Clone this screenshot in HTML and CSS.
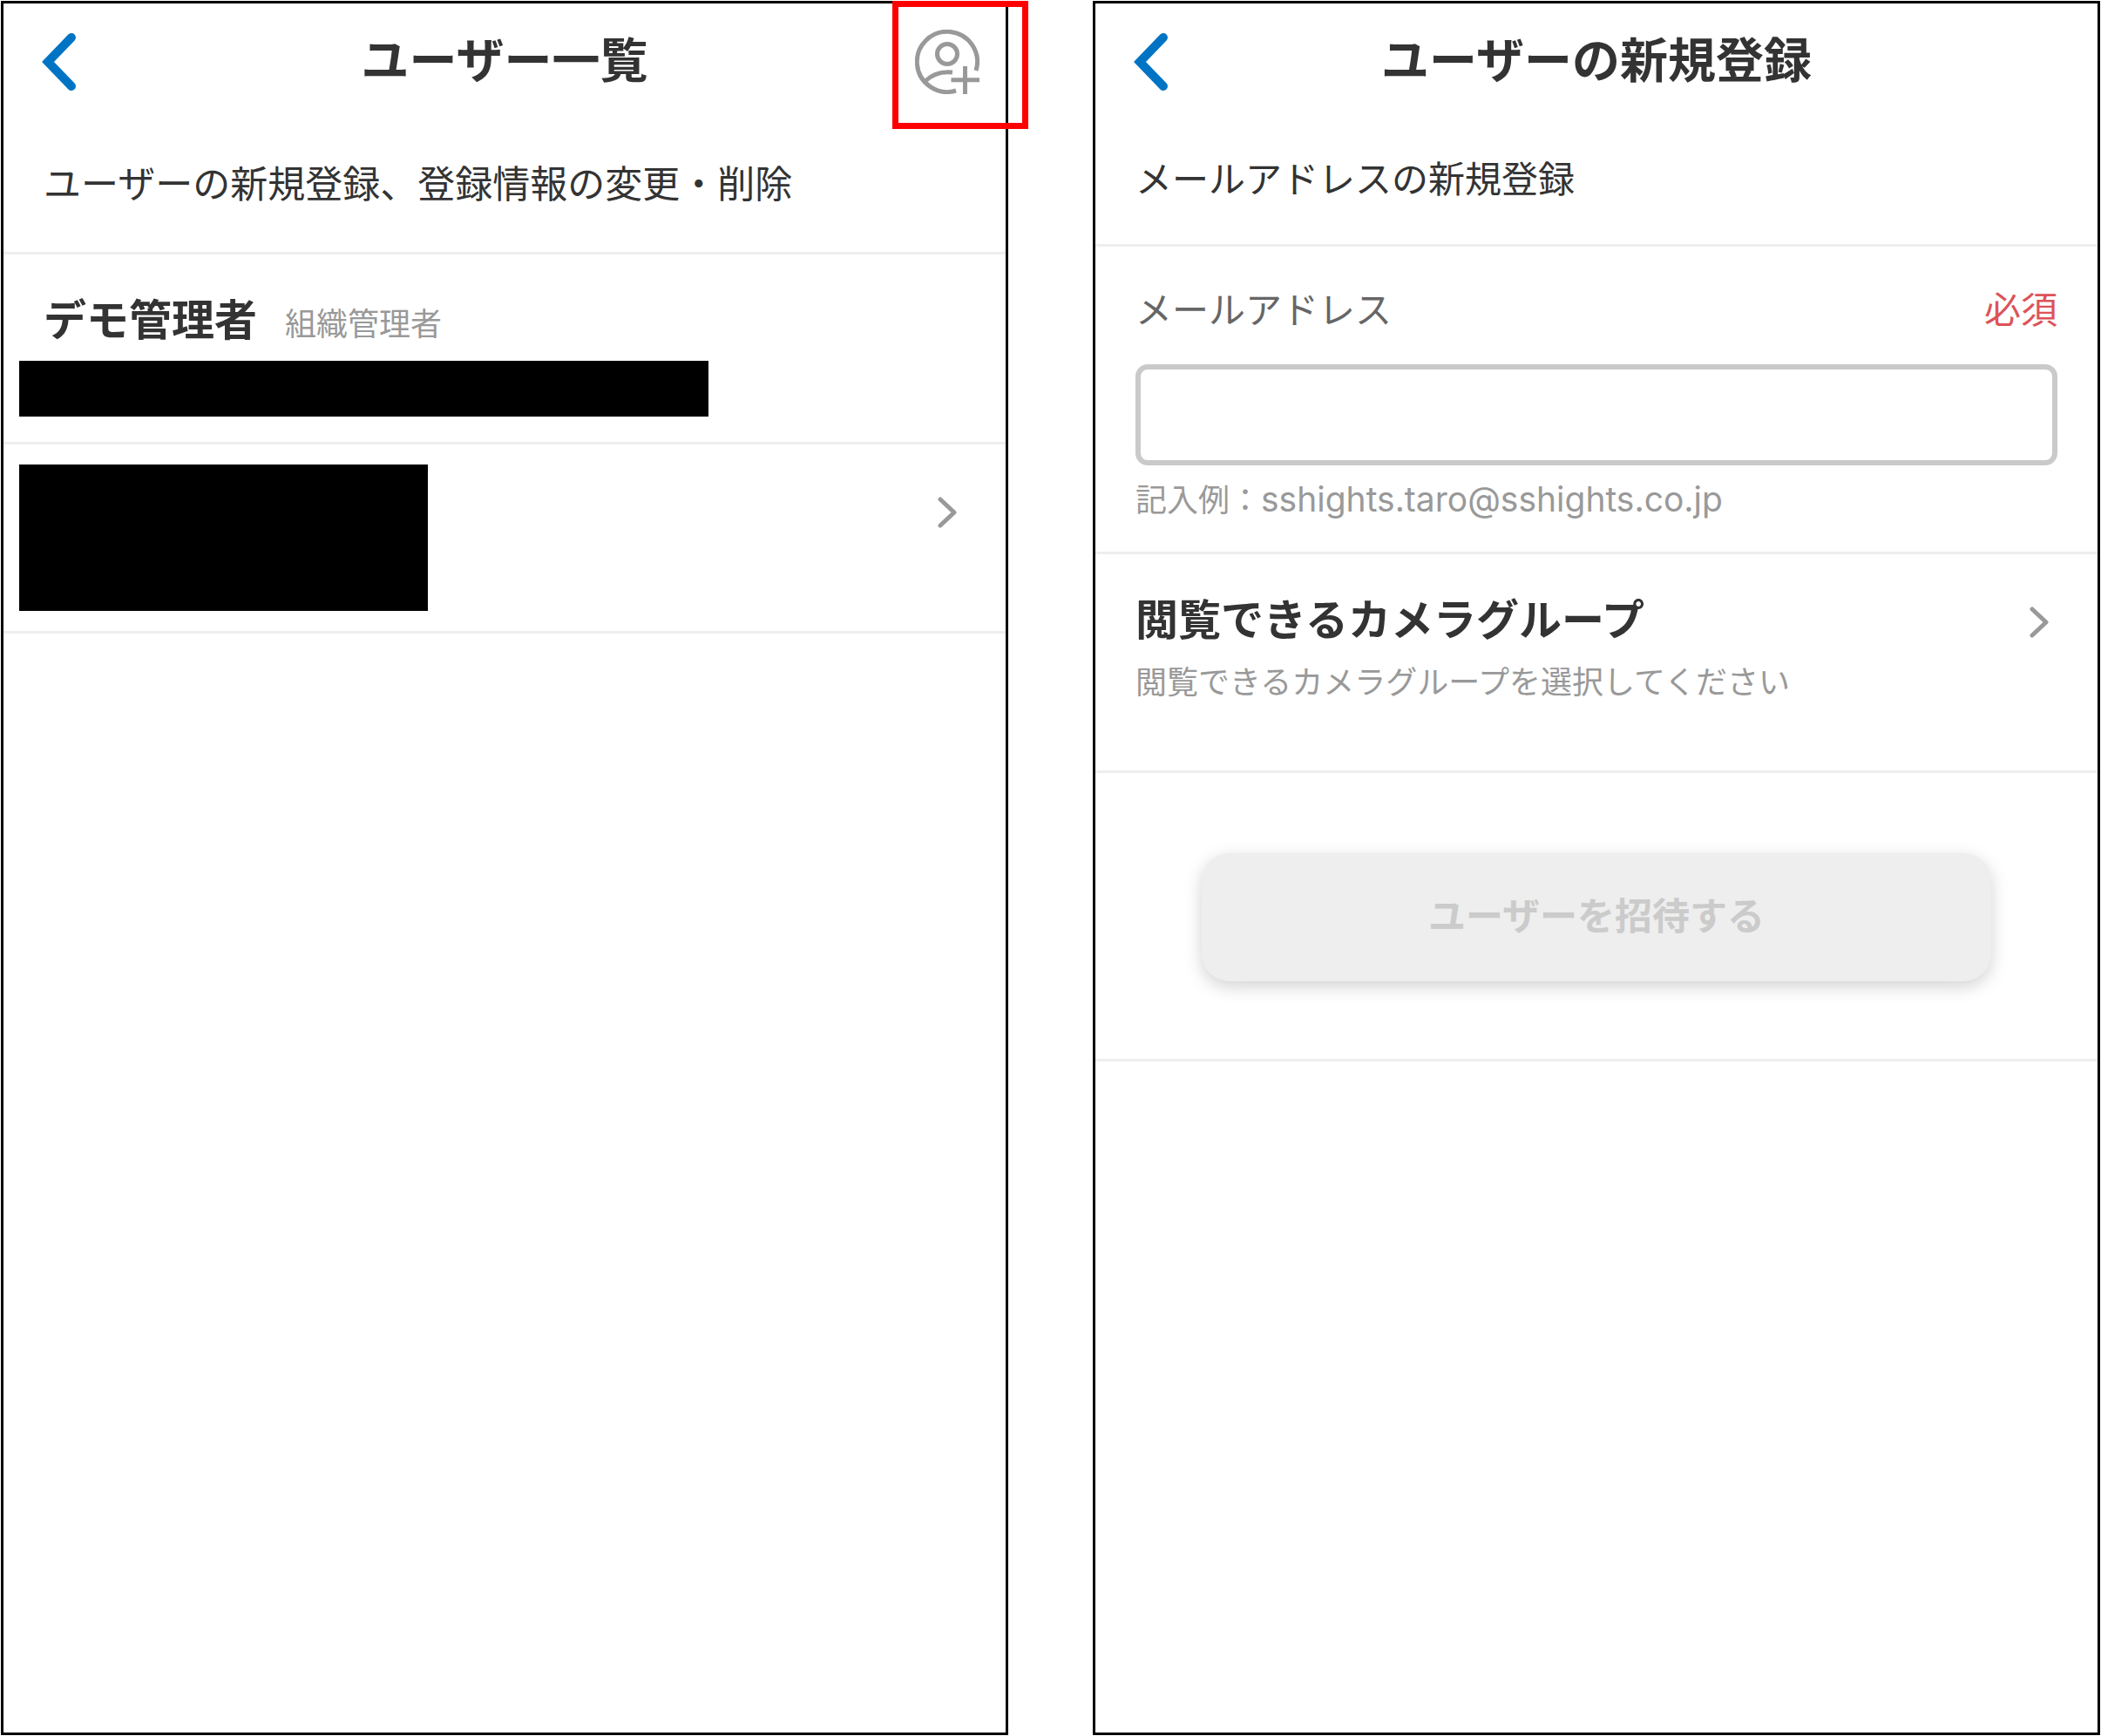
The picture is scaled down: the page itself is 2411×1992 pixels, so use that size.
FILE: index.html
```html
<!DOCTYPE html>
<html lang="ja">
  <head>
    <meta charset="UTF-8" />
    <meta name="viewport" content="width=device-width, initial-scale=1.0" />
    <title>ユーザー一覧</title>
    <link rel="stylesheet" href="styles.css">
  </head>
  <body>
    <main class="screens">
      <!-- ユーザー一覧 -->
      <section class="screen">
        <header class="header">
          <a class="back" href="#" aria-label="戻る">
            <svg width="39" height="66" viewBox="0 0 39 66">
              <path d="M34 5 L7 33 L34 61" />
            </svg>
          </a>
          <h1>ユーザー一覧</h1>
          <button class="add-user" type="button" aria-label="ユーザーを追加">
            <svg width="74" height="74" viewBox="0 0 74 74">
              <path d="M70 47 A34.6 34.6 0 1 0 47 70" />
              <circle cx="37" cy="28" r="11.5" />
              <path d="M12 59 C19 52 28 47.5 43 49" />
              <path d="M57.5 42 V74 M41.5 57.8 H74" />
            </svg>
          </button>
          <span class="highlight"></span>
        </header>
        <p class="lead lead-list">ユーザーの新規登録、登録情報の変更・削除</p>
        <ul class="users">
          <li class="user">
            <div class="user-name">
              <strong>デモ管理者</strong>
              <span>組織管理者</span>
            </div>
            <div class="mask mask-mail"></div>
          </li>
          <li class="user user-link">
            <div class="mask mask-user"></div>
            <a class="arrow" href="#" aria-label="詳細">
              <svg width="22" height="36" viewBox="0 0 22 36">
                <path d="M3 3 L19 18 L3 33" />
              </svg>
            </a>
          </li>
        </ul>
      </section>

      <!-- ユーザーの新規登録 -->
      <section class="screen">
        <header class="header">
          <a class="back" href="#" aria-label="戻る">
            <svg width="39" height="66" viewBox="0 0 39 66">
              <path d="M34 5 L7 33 L34 61" />
            </svg>
          </a>
          <h1>ユーザーの新規登録</h1>
        </header>
        <p class="lead lead-form">メールアドレスの新規登録</p>
        <form>
          <div class="field">
            <div class="field-head">
              <label for="email">メールアドレス</label>
              <span class="required">必須</span>
            </div>
            <input type="email" id="email" />
            <p class="hint">記入例：<span class="mail">sshights.taro@sshights.co.jp</span></p>
          </div>
          <a class="group" href="#">
            <span class="group-text">
              <strong>閲覧できるカメラグループ</strong>
              <span class="hint">閲覧できるカメラグループを選択してください</span>
            </span>
            <span class="arrow">
              <svg width="22" height="36" viewBox="0 0 22 36">
                <path d="M3 3 L19 18 L3 33" />
              </svg>
            </span>
          </a>
          <div class="submit">
            <button class="invite" type="submit" disabled>ユーザーを招待する</button>
          </div>
        </form>
      </section>
    </main>
  </body>
</html>
```

FILE: styles.css
```css
* {
  margin: 0;
  padding: 0;
  box-sizing: border-box;
}

body {
  font-family: "Noto Sans CJK JP", sans-serif;
  background-color: #fff;
  color: #333;
}

.screens {
  display: grid;
  grid-template-columns: 1fr 1fr;
  gap: 97px;
  min-height: 100vh;
  padding: 1px;
}

.screen {
  min-width: 0;
  border: 3px solid #000;
}

svg {
  display: block;
  fill: none;
  stroke-width: 5;
}

/* header */
.header {
  position: relative;
  display: grid;
  grid-template-columns: 1fr auto 1fr;
  align-items: center;
  height: 134px;
  padding: 0 30px;
}

h1 {
  padding-bottom: 12px;
  font-size: 55px;
  line-height: 80px;
  font-weight: bold;
}

.back {
  justify-self: start;
  padding-left: 14px;
}

.back svg {
  stroke: #0074c4;
  stroke-width: 10;
  stroke-linecap: round;
  stroke-linejoin: miter;
}

.add-user {
  justify-self: end;
  background: none;
  border: none;
  cursor: pointer;
}

.add-user svg {
  stroke: #999;
}

/* red frame over the add button */
.highlight {
  position: absolute;
  top: -3px;
  right: -26px;
  width: 156px;
  height: 147px;
  border: 7px solid #f00;
  pointer-events: none;
}

.lead {
  border-bottom: 3px solid #eee;
  line-height: 60px;
}

.lead-list {
  padding: 40px 46px 51px;
  font-size: 43px;
}

.lead-form {
  padding: 35px 46px 47px;
  font-size: 42px;
}

/* user list */
.users {
  list-style: none;
}

.user {
  padding: 36px 18px 29px;
  border-bottom: 3px solid #eee;
}

.user-name {
  display: flex;
  align-items: baseline;
  gap: 32px;
  height: 86px;
  padding-left: 28px;
  line-height: 72px;
}

.user-name strong {
  font-size: 49px;
}

.user-name span {
  font-size: 36px;
  color: #999;
}

.mask {
  background-color: #000;
}

.mask-mail {
  width: 71%;
  height: 64px;
}

.mask-user {
  width: 469px;
  height: 168px;
}

.user-link {
  display: flex;
  justify-content: space-between;
  padding: 23px 56px 23px 18px;
}

.arrow {
  padding-top: 37px;
}

.arrow svg {
  stroke: #999;
  stroke-linecap: round;
  stroke-linejoin: round;
}

/* form */
.field {
  padding: 40px 46px 36px;
  border-bottom: 3px solid #eee;
}

.field-head {
  display: flex;
  justify-content: space-between;
  height: 95px;
  font-size: 42px;
  line-height: 60px;
  color: #666;
}

.required {
  color: #dc5359;
}

input[type="email"] {
  display: block;
  width: 100%;
  height: 116px;
  padding: 0 24px;
  border: 6px solid #cacaca;
  border-radius: 14px;
  font-family: inherit;
  font-size: 42px;
  color: #333;
}

.hint {
  font-size: 36px;
  line-height: 52px;
  color: #999;
}

.field .hint {
  padding-top: 11px;
}

.mail {
  font-family: Inter, sans-serif;
  font-size: 39px;
  line-height: 36px;
}

.group {
  display: flex;
  justify-content: space-between;
  padding: 36px 56px 78px 46px;
  border-bottom: 3px solid #eee;
  color: #333;
  text-decoration: none;
}

.group-text {
  display: flex;
  flex-direction: column;
  gap: 10px;
}

.group strong {
  font-size: 49px;
  line-height: 72px;
}

.group .arrow {
  padding-top: 24px;
}

.submit {
  padding: 92px 122px 89px;
  border-bottom: 3px solid #eee;
}

.invite {
  display: block;
  width: 100%;
  height: 147px;
  padding-bottom: 10px;
  border: none;
  border-radius: 32px;
  background-color: #eee;
  box-shadow: 0 6px 20px rgba(0, 0, 0, 0.18);
  font-family: inherit;
  font-size: 43px;
  font-weight: bold;
  color: #cbcbcb;
}
```
